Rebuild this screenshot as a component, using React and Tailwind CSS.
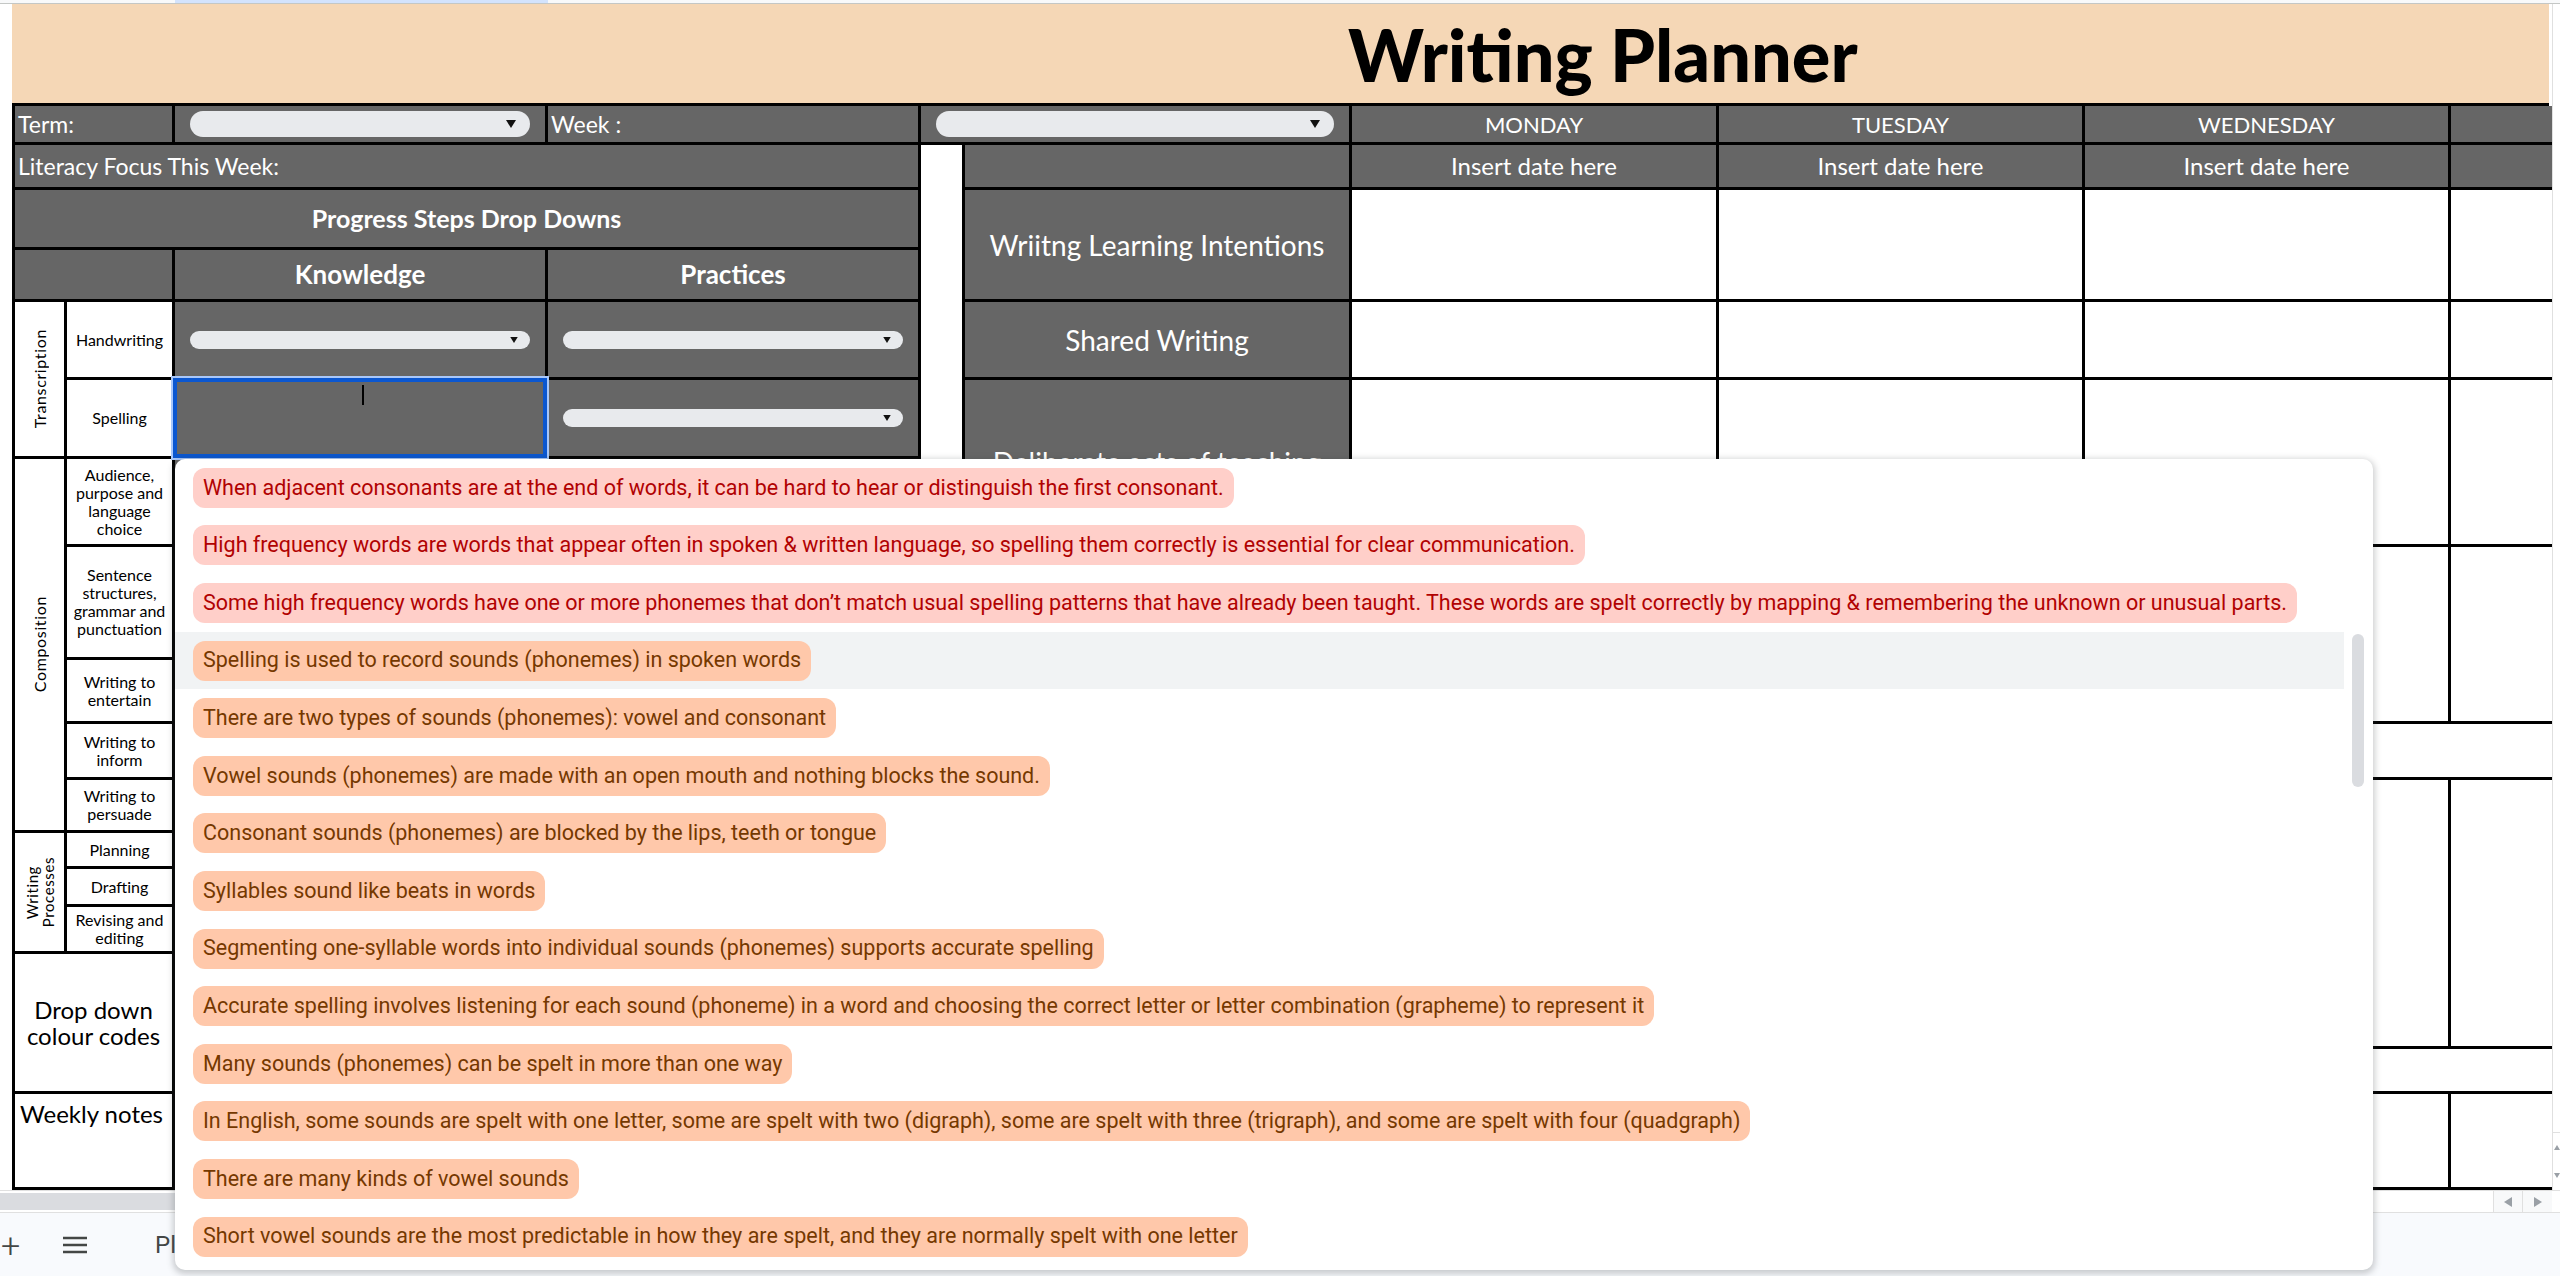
import React from 'react';
import clsx from 'clsx';

const sheetFont = { fontFamily: 'Lato, "Liberation Sans", sans-serif' };

const chips = [
    ['When adjacent consonants are at the end of words, it can be hard to hear or distinguish the first consonant.', 'red'],
    ['High frequency words are words that appear often in spoken & written language, so spelling them correctly is essential for clear communication.', 'red'],
    ['Some high frequency words have one or more phonemes that don’t match usual spelling patterns that have already been taught. These words are spelt correctly by mapping & remembering the unknown or unusual parts.', 'red'],
    ['Spelling is used to record sounds (phonemes) in spoken words', 'orange'],
    ['There are two types of sounds (phonemes): vowel and consonant', 'orange'],
    ['Vowel sounds (phonemes) are made with an open mouth and nothing blocks the sound.', 'orange'],
    ['Consonant sounds (phonemes) are blocked by the lips, teeth or tongue', 'orange'],
    ['Syllables sound like beats in words', 'orange'],
    ['Segmenting one-syllable words into individual sounds (phonemes) supports accurate spelling', 'orange'],
    ['Accurate spelling involves listening for each sound (phoneme) in a word and choosing the correct letter or letter combination (grapheme) to represent it', 'orange'],
    ['Many sounds (phonemes) can be spelt in more than one way', 'orange'],
    ['In English, some sounds are spelt with one letter, some are spelt with two (digraph), some are spelt with three (trigraph), and some are spelt with four (quadgraph)', 'orange'],
    ['There are many kinds of vowel sounds', 'orange'],
    ['Short vowel sounds are the most predictable in how they are spelt, and they are normally spelt with one letter', 'orange'],
];

// one sheet cell, black 3px grid lines on right and bottom
const Cell = ({ className, children, last }) => (
    <div className={clsx('flex items-center justify-center text-center border-b-[3px] border-black', !last && 'border-r-[3px]', className)}>
        {children}
    </div>
);

const Arrow = ({ big }) => (
    <svg className={big ? 'w-[10px] h-[8px]' : 'w-[8px] h-[6px]'} viewBox="0 0 10 8">
        <path d="M0 0h10L5 8z" fill="#111" />
    </svg>
);

const Pill = ({ big }) => (
    <div className={clsx('mx-[15px] w-full rounded-full bg-[#e8eaed] flex items-center justify-end', big ? 'h-[26px] pr-[14px]' : 'h-[18px] pr-[12px]')}>
        <Arrow big={big} />
    </div>
);

const SmallLabel = ({ className, children }) => (
    <Cell className={clsx('col-start-2 bg-white text-black text-[16px] leading-[18px] px-[2px]', className)}>
        <span>{children}</span>
    </Cell>
);

const Planner = () => (
    <div className="grid border-l-[3px] border-black grid-cols-[52px_108px_373px_373px_44px_387px_367px_366px_366px_1fr] grid-rows-[39px_45px_60px_52px_78px_79px_88px_113px_64px_56px_53px_36px_38px_47px_95px_45px_96px] text-white" style={sheetFont}>
        {/* row 1 */}
        <Cell className="col-start-1 col-span-2 row-start-1 bg-[#666666] !justify-start pl-[3px] text-[23px]">Term:</Cell>
        <Cell className="col-start-3 row-start-1 bg-[#666666]"><Pill big /></Cell>
        <Cell className="col-start-4 row-start-1 bg-[#666666] !justify-start pl-[3px] text-[23px]">Week :</Cell>
        <Cell className="col-start-5 col-span-2 row-start-1 bg-[#666666]"><Pill big /></Cell>
        <Cell className="col-start-7 row-start-1 bg-[#666666] text-[22px]">MONDAY</Cell>
        <Cell className="col-start-8 row-start-1 bg-[#666666] text-[22px]">TUESDAY</Cell>
        <Cell className="col-start-9 row-start-1 bg-[#666666] text-[22px]">WEDNESDAY</Cell>
        <Cell last className="col-start-10 row-start-1 bg-[#666666]" />

        {/* row 2 */}
        <Cell className="col-start-1 col-span-4 row-start-2 bg-[#666666] !justify-start pl-[3px] text-[23px]">Literacy Focus This Week:</Cell>
        <div className="col-start-5 row-start-2 row-span-16 bg-white border-r-[3px] border-black" />
        <Cell className="col-start-6 row-start-2 bg-[#666666]" />
        <Cell className="col-start-7 row-start-2 bg-[#666666] text-[24px]">Insert date here</Cell>
        <Cell className="col-start-8 row-start-2 bg-[#666666] text-[24px]">Insert date here</Cell>
        <Cell className="col-start-9 row-start-2 bg-[#666666] text-[24px]">Insert date here</Cell>
        <Cell last className="col-start-10 row-start-2 bg-[#666666]" />

        {/* progress steps header */}
        <Cell className="col-start-1 col-span-4 row-start-3 bg-[#666666] font-bold text-[25px]">Progress Steps Drop Downs</Cell>
        <Cell className="col-start-1 col-span-2 row-start-4 bg-[#666666]" />
        <Cell className="col-start-3 row-start-4 bg-[#666666] font-bold text-[26px]">Knowledge</Cell>
        <Cell className="col-start-4 row-start-4 bg-[#666666] font-bold text-[26px]">Practices</Cell>

        {/* transcription */}
        <Cell className="col-start-1 row-start-5 row-span-2 bg-white text-black text-[16px]">
            <span className="[writing-mode:vertical-rl] rotate-180 tracking-[0.04em]">Transcription</span>
        </Cell>
        <SmallLabel className="row-start-5">Handwriting</SmallLabel>
        <Cell className="col-start-3 row-start-5 bg-[#666666]"><Pill /></Cell>
        <Cell className="col-start-4 row-start-5 bg-[#666666]"><Pill /></Cell>
        <SmallLabel className="row-start-6">Spelling</SmallLabel>
        <Cell className="col-start-3 row-start-6 bg-[#666666] relative">
            <div className="absolute -left-[2px] -top-[2px] -right-[2px] -bottom-[2px] border-[4px] border-[#0b57d0] shadow-[0_0_0_2px_#a8c7fa]" />
            <div className="absolute left-[187px] top-[5px] w-[2px] h-[20px] bg-black" />
        </Cell>
        <Cell className="col-start-4 row-start-6 bg-[#666666]"><Pill /></Cell>

        {/* composition */}
        <Cell className="col-start-1 row-start-7 row-span-5 bg-white text-black text-[16px]">
            <span className="[writing-mode:vertical-rl] rotate-180 tracking-[0.04em]">Composition</span>
        </Cell>
        <SmallLabel className="row-start-7">Audience, purpose and language choice</SmallLabel>
        <SmallLabel className="row-start-8">Sentence structures, grammar and punctuation</SmallLabel>
        <SmallLabel className="row-start-9">Writing to entertain</SmallLabel>
        <SmallLabel className="row-start-10">Writing to inform</SmallLabel>
        <SmallLabel className="row-start-11">Writing to persuade</SmallLabel>
        <Cell className="col-start-3 row-start-7 bg-[#666666]"><Pill /></Cell>
        <Cell className="col-start-4 row-start-7 bg-[#666666]"><Pill /></Cell>
        <Cell className="col-start-3 row-start-8 bg-[#666666]"><Pill /></Cell>
        <Cell className="col-start-4 row-start-8 bg-[#666666]"><Pill /></Cell>
        <Cell className="col-start-3 row-start-9 bg-[#666666]"><Pill /></Cell>
        <Cell className="col-start-4 row-start-9 bg-[#666666]"><Pill /></Cell>
        <Cell className="col-start-3 row-start-10 bg-[#666666]"><Pill /></Cell>
        <Cell className="col-start-4 row-start-10 bg-[#666666]"><Pill /></Cell>
        <Cell className="col-start-3 row-start-11 bg-[#666666]"><Pill /></Cell>
        <Cell className="col-start-4 row-start-11 bg-[#666666]"><Pill /></Cell>

        {/* writing processes */}
        <Cell className="col-start-1 row-start-12 row-span-3 bg-white text-black text-[15px] leading-[16px]">
            <span className="[writing-mode:vertical-rl] rotate-180 tracking-[0.04em]">Writing<br />Processes</span>
        </Cell>
        <SmallLabel className="row-start-12">Planning</SmallLabel>
        <SmallLabel className="row-start-13">Drafting</SmallLabel>
        <SmallLabel className="row-start-14">Revising and editing</SmallLabel>
        <Cell className="col-start-3 row-start-12 bg-[#666666]"><Pill /></Cell>
        <Cell className="col-start-4 row-start-12 bg-[#666666]"><Pill /></Cell>
        <Cell className="col-start-3 row-start-13 bg-[#666666]"><Pill /></Cell>
        <Cell className="col-start-4 row-start-13 bg-[#666666]"><Pill /></Cell>
        <Cell className="col-start-3 row-start-14 bg-[#666666]"><Pill /></Cell>
        <Cell className="col-start-4 row-start-14 bg-[#666666]"><Pill /></Cell>

        <Cell className="col-start-1 col-span-2 row-start-15 row-span-2 bg-white text-black text-[24px] leading-[26px]">
            <span>Drop down<br />colour codes</span>
        </Cell>
        <Cell className="col-start-3 col-span-2 row-start-15 row-span-2 bg-white" />
        <Cell className="col-start-1 col-span-2 row-start-17 bg-white text-black text-[24px] whitespace-nowrap !items-start !justify-start pl-[5px] pt-[2px]">Weekly notes</Cell>
        <Cell className="col-start-3 col-span-2 row-start-17 bg-white" />

        {/* right hand planner */}
        <Cell className="col-start-6 row-start-3 row-span-2 bg-[#666666] text-[28px]">Wriitng Learning Intentions</Cell>
        <Cell className="col-start-7 row-start-3 row-span-2 bg-white" />
        <Cell className="col-start-8 row-start-3 row-span-2 bg-white" />
        <Cell className="col-start-9 row-start-3 row-span-2 bg-white" />
        <Cell last className="col-start-10 row-start-3 row-span-2 bg-white" />

        <Cell className="col-start-6 row-start-5 bg-[#666666] text-[28px]">Shared Writing</Cell>
        <Cell className="col-start-7 row-start-5 bg-white" />
        <Cell className="col-start-8 row-start-5 bg-white" />
        <Cell className="col-start-9 row-start-5 bg-white" />
        <Cell last className="col-start-10 row-start-5 bg-white" />

        <Cell className="col-start-6 row-start-6 row-span-2 bg-[#666666] text-[28px]">Deliberate acts of teaching</Cell>
        <Cell className="col-start-7 row-start-6 row-span-2 bg-white" />
        <Cell className="col-start-8 row-start-6 row-span-2 bg-white" />
        <Cell className="col-start-9 row-start-6 row-span-2 bg-white" />
        <Cell last className="col-start-10 row-start-6 row-span-2 bg-white" />

        <Cell className="col-start-6 row-start-8 row-span-2 bg-[#666666]" />
        <Cell className="col-start-7 row-start-8 row-span-2 bg-white" />
        <Cell className="col-start-8 row-start-8 row-span-2 bg-white" />
        <Cell className="col-start-9 row-start-8 row-span-2 bg-white" />
        <Cell last className="col-start-10 row-start-8 row-span-2 bg-white" />

        <Cell className="col-start-6 row-start-10 bg-[#666666]" />
        <Cell last className="col-start-7 col-span-4 row-start-10 bg-white" />

        <Cell className="col-start-6 row-start-11 row-span-5 bg-[#666666]" />
        <Cell className="col-start-7 row-start-11 row-span-5 bg-white" />
        <Cell className="col-start-8 row-start-11 row-span-5 bg-white" />
        <Cell className="col-start-9 row-start-11 row-span-5 bg-white" />
        <Cell last className="col-start-10 row-start-11 row-span-5 bg-white" />

        <Cell className="col-start-6 row-start-16 bg-[#666666]" />
        <Cell last className="col-start-7 col-span-4 row-start-16 bg-white" />

        <Cell className="col-start-6 row-start-17 bg-[#666666]" />
        <Cell className="col-start-7 row-start-17 bg-white" />
        <Cell className="col-start-8 row-start-17 bg-white" />
        <Cell className="col-start-9 row-start-17 bg-white" />
        <Cell last className="col-start-10 row-start-17 bg-white" />
    </div>
);

const ChipMenu = () => (
    <div className="absolute left-[175px] top-[459px] w-[2198px] h-[811px] bg-white rounded-[10px] shadow-[0_2px_6px_2px_rgba(60,64,67,0.25)] overflow-hidden" style={{ fontFamily: 'Roboto, "Liberation Sans", sans-serif' }}>
        <div className="w-[2169px]">
            {chips.map(([text, tone], i) => (
                <div key={i} className={clsx('h-[57.6px] flex items-center pl-[18px]', i === 3 && 'bg-[#f1f3f4]')}>
                    <span className={clsx('h-[40px] px-[10px] rounded-[12px] flex items-center text-[21.5px] whitespace-nowrap', tone === 'red' ? 'bg-[#ffcfc9] text-[#b10202]' : 'bg-[#ffc8aa] text-[#753800]')}>
                        {text}
                    </span>
                </div>
            ))}
        </div>
        <div className="absolute left-[2177px] top-[175px] w-[12px] h-[153px] rounded-full bg-[#dadce0]" />
    </div>
);

const Tri = ({ d }) => (
    <svg className="w-[8px] h-[10px]" viewBox="0 0 8 10">
        <path d={d} fill="#9aa0a6" />
    </svg>
);

const App = () => {
    return (
        <div className="relative w-[2560px] h-[1276px] overflow-hidden bg-white flex flex-col">
            {/* column header remnants */}
            <div className="h-[4px] flex bg-[#f8f9fa] border-b border-[#c4c7c5]">
                <div className="w-[175px]" />
                <div className="w-[373px] bg-[#d3e3fd]" />
            </div>

            <div className="flex h-[1186px]">
                <div className="w-[12px] bg-white" />
                <div className="w-[2540px] flex flex-col">
                    <div className="h-[102px] bg-[#f5d7b6] border-b-[3px] border-black flex items-center pl-[1336px] mr-[3px]">
                        <h1 className="text-[72px] leading-none font-black text-black" style={sheetFont}>Writing Planner</h1>
                    </div>
                    <Planner />
                </div>
                <div className="flex-1 border-l border-[#e0e0e0] flex flex-col justify-end">
                    <div className="h-[58px] border-t border-[#e0e0e0] flex flex-col items-center justify-around">
                        <svg className="w-[6px] h-[5px]" viewBox="0 0 6 5"><path d="M3 0L6 5H0z" fill="#9aa0a6" /></svg>
                        <svg className="w-[6px] h-[5px]" viewBox="0 0 6 5"><path d="M0 0h6L3 5z" fill="#9aa0a6" /></svg>
                    </div>
                </div>
            </div>

            {/* horizontal scrollbar */}
            <div className="h-[22px] flex items-center border-t border-[#e0e0e0] bg-white">
                <div className="w-[1500px] h-[17px] bg-[#dadce0]" />
                <div className="flex-1" />
                <div className="flex h-full border-l border-[#e0e0e0] bg-[#f8f9fa]">
                    <div className="w-[29px] flex items-center justify-center border-r border-[#e0e0e0]"><Tri d="M8 0v10L0 5z" /></div>
                    <div className="w-[29px] flex items-center justify-center"><Tri d="M0 0v10l8-5z" /></div>
                </div>
                <div className="w-[8px] border-l border-[#e0e0e0]" />
            </div>

            {/* sheet tabs */}
            <div className="h-[64px] bg-[#f8fafd] border-t border-[#e0e0e0] flex items-center text-[#444746]" style={{ fontFamily: 'Roboto, "Liberation Sans", sans-serif' }}>
                <span className="text-[34px] font-light leading-none pl-[1px] w-[34px]">+</span>
                <svg className="ml-[28px] w-[26px] h-[20px]" viewBox="0 0 26 20">
                    <path d="M1 3h24M1 10h24M1 17h24" stroke="#444746" strokeWidth="2.5" />
                </svg>
                <span className="ml-[67px] w-[20px] overflow-hidden whitespace-nowrap text-[24px]">Planner</span>
            </div>

            <ChipMenu />
        </div>
    );
};

export default App;
